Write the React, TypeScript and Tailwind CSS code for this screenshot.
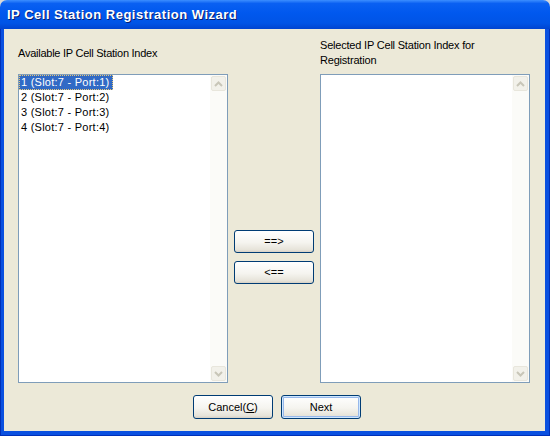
import React from "react";

const btn =
  "h-[23px] w-[80px] rounded-[3px] border border-[#003C74] bg-[linear-gradient(180deg,#ffffff_0%,#f5f4ef_55%,#e6e3d9_90%,#d6d0c5_100%)] text-[11px] text-black flex items-center justify-center leading-none";

function Chevron({ up }: { up: boolean }) {
  return (
    <svg width="9" height="6" viewBox="0 0 9 6">
      <path
        d={up ? "M1 5 L4.5 1.5 L8 5" : "M1 1 L4.5 4.5 L8 1"}
        fill="none"
        stroke="#C8C6B8"
        strokeWidth="2"
      />
    </svg>
  );
}

function ScrollBar() {
  return (
    <div className="w-[17px] h-full flex flex-col justify-between bg-[#FBFBF8] py-[1px] pl-[1px]">
      <div className="w-[15px] h-[15px] rounded-[2px] border border-[#E8E6DC] bg-[#F2F1EA] flex items-center justify-center">
        <Chevron up />
      </div>
      <div className="w-[15px] h-[15px] rounded-[2px] border border-[#E8E6DC] bg-[#F2F1EA] flex items-center justify-center">
        <Chevron up={false} />
      </div>
    </div>
  );
}

const items = [
  "1 (Slot:7 - Port:1)",
  "2 (Slot:7 - Port:2)",
  "3 (Slot:7 - Port:3)",
  "4 (Slot:7 - Port:4)",
];

export default function App() {
  return (
    <div className="w-[550px] h-[436px] flex flex-col bg-[#D8D8D8] font-['Liberation_Sans',Arial,sans-serif]">
      <div className="h-[29px] shrink-0 rounded-t-[7px] bg-[linear-gradient(180deg,#3C8EFF_0%,#0A60F2_12%,#0058EE_45%,#0054E6_80%,#0044D0_100%)] flex items-center pl-[7px]">
        <span className="text-white font-bold text-[13px] tracking-[0.5px] [text-shadow:1px_1px_0_#0A1E6E]">
          IP Cell Station Registration Wizard
        </span>
      </div>
      <div className="flex-1 flex bg-[#0A50E0] border-l-[1px] border-r-[1px] border-b-[1px] border-[#0030B8]">
        <div className="flex-1 flex ml-[3px] mr-[4px] mb-[4px] bg-[#ECE9D8]">
          <div className="flex-1 flex flex-col pt-[9px] pl-[14px] pr-[15px] text-[11px] text-black">
            <div className="grid grid-cols-[210px_92px_210px] h-[30px] leading-[15px]">
              <div className="flex items-center tracking-[-0.25px]">Available IP Cell Station Index</div>
              <div />
              <div className="tracking-[-0.2px]">
                Selected IP Cell Station Index for
                <br />
                Registration
              </div>
            </div>
            <div className="grid grid-cols-[210px_92px_210px] h-[309px] mt-[6px]">
              <div className="border border-[#7F9DB9] bg-white flex">
                <div className="flex-1 flex flex-col leading-[15px] tracking-[0.25px]">
                  {items.map((t, i) => (
                    <div key={t} className="h-[15px] flex">
                      <span
                        className={
                          i === 0
                            ? "bg-[#316AC5] text-white pl-[2px] pr-[3px] outline outline-1 outline-dotted outline-[#E8C878] -outline-offset-1"
                            : "pl-[2px] pr-[3px]"
                        }
                      >
                        {t}
                      </span>
                    </div>
                  ))}
                </div>
                <ScrollBar />
              </div>
              <div className="flex flex-col items-center pt-[156px] gap-[8px]">
                <button className={btn}>==&gt;</button>
                <button className={btn}>&lt;==</button>
              </div>
              <div className="border border-[#7F9DB9] bg-white flex">
                <div className="flex-1" />
                <ScrollBar />
              </div>
            </div>
            <div className="flex justify-center gap-[8px] mt-[12px] pl-[6px]">
              <button className={btn + " !h-[24px]"}>
                <span>
                  Cancel(<span className="underline">C</span>)
                </span>
              </button>
              <button
                className={
                  btn +
                  " !h-[24px] shadow-[inset_0_0_0_1px_#CEE7FF,inset_0_0_0_2px_#98B8EA]"
                }
              >
                Next
              </button>
            </div>
          </div>
        </div>
      </div>
    </div>
  );
}
